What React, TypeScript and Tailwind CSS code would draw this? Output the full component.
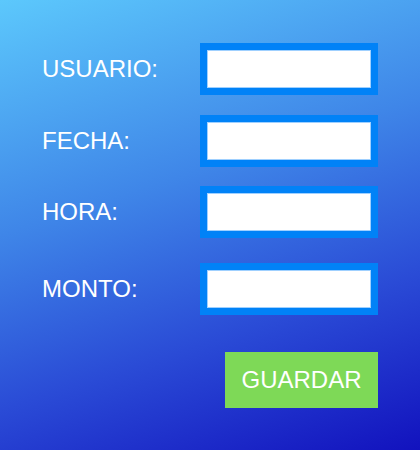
const fields = [
  { label: "USUARIO:", gap: "mt-0" },
  { label: "FECHA:", gap: "mt-5" },
  { label: "HORA:", gap: "mt-[19px]" },
  { label: "MONTO:", gap: "mt-[25px]" },
];

export default function App() {
  return (
    <div className="flex h-[450px] w-[420px] flex-col bg-[linear-gradient(162deg,#5cc8fc_0%,#3f86e8_40%,#2a4bd6_70%,#1212be_100%)] pl-[42px] pr-[42px] pt-[43px] font-['Liberation_Sans',Arial,sans-serif] text-white">
      {fields.map((field) => (
        <div key={field.label} className={`flex items-center ${field.gap}`}>
          <label className="w-[158px] text-[24px] leading-none">{field.label}</label>
          <div className="h-[52px] w-[178px] bg-[#0182f7] p-[7px]">
            <input className="h-full w-full border border-[#9fd0ff] bg-white text-black outline-none" />
          </div>
        </div>
      ))}
      <button className="mt-[37px] h-[56px] w-[153px] self-end bg-[#7ed957] text-[24px] leading-none text-white">
        GUARDAR
      </button>
    </div>
  );
}
